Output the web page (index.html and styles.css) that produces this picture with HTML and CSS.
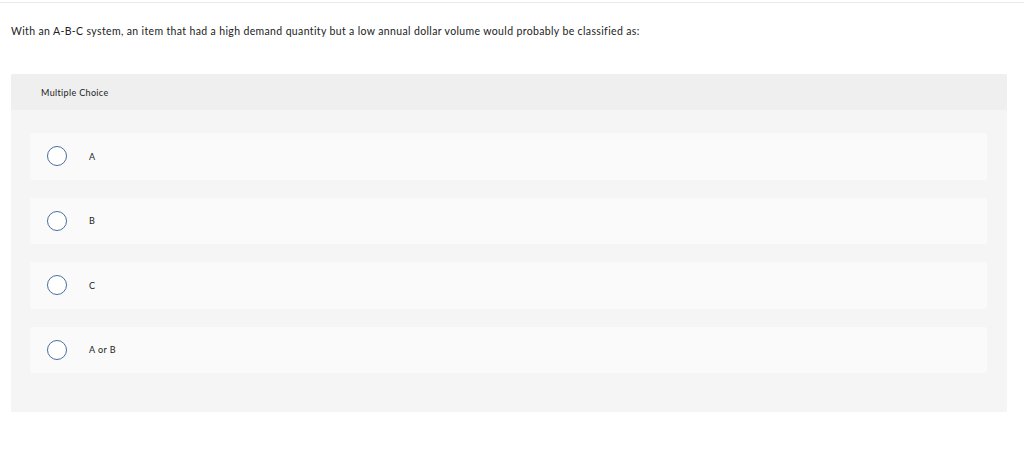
FILE: index.html
```html
<!DOCTYPE html>
<html>
<head>
<meta charset="utf-8">
<link rel="stylesheet" href="styles.css">
</head>
<body>
<div class="page">
  <div class="topline"></div>
  <p class="question">With an A-B-C system, an item that had a high demand quantity but a low annual dollar volume would probably be classified as:</p>
  <div class="panel">
    <div class="panel-head">Multiple Choice</div>
    <div class="options">
      <label class="option"><span class="radio"></span><span class="opt-text">A</span></label>
      <label class="option"><span class="radio"></span><span class="opt-text">B</span></label>
      <label class="option"><span class="radio"></span><span class="opt-text">C</span></label>
      <label class="option"><span class="radio"></span><span class="opt-text">A or B</span></label>
    </div>
  </div>
</div>
</body>
</html>
```

FILE: styles.css
```css
html, body {
  margin: 0;
  padding: 0;
  background: #ffffff;
}
body {
  font-family: Lato, "Liberation Sans", sans-serif;
  color: #1a1a1a;
}
.page {
  width: 1024px;
  height: 458px;
  padding-top: 2px;
  box-sizing: border-box;
}
.topline {
  height: 1px;
  background: #ececec;
}
.question {
  margin: 21px 0 0 11px;
  font-size: 10.5px;
  line-height: 14px;
  letter-spacing: 0.36px;
  color: #222;
}
.panel {
  margin: 36px 0 0 11px;
  width: 996px;
  height: 338px;
  background: #f5f5f5;
  border-radius: 2px;
}
.panel-head {
  height: 36px;
  background: #efefef;
  display: flex;
  align-items: center;
  padding-left: 30px;
  font-size: 9px;
  letter-spacing: 0.35px;
  color: #222;
  border-radius: 2px 2px 0 0;
}
.options {
  display: flex;
  flex-direction: column;
  gap: 18px;
  padding: 23px 20px 0 19px;
}
.option {
  height: 46.5px;
  background: #fafafa;
  border-radius: 2px;
  display: flex;
  align-items: center;
  padding-left: 17px;
}
.radio {
  width: 18px;
  height: 18px;
  border: 1px solid #4a6d9e;
  border-radius: 50%;
  background: #fff;
  flex: none;
}
.opt-text {
  margin-left: 22px;
  font-size: 9px;
  letter-spacing: 0.45px;
  color: #222;
}
```
